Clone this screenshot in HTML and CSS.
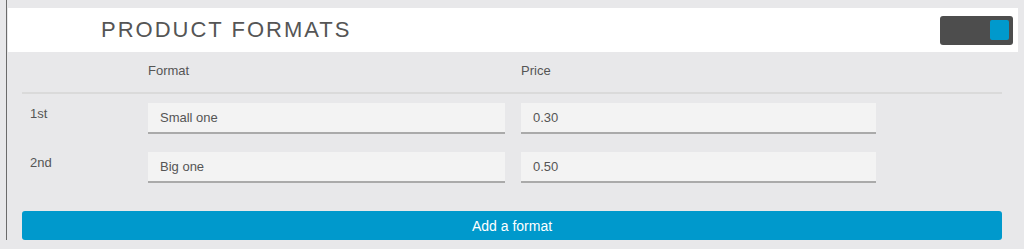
FILE: index.html
```html
<!DOCTYPE html>
<html lang="en">
<head>
    <meta charset="UTF-8">
    <meta name="viewport" content="width=device-width, initial-scale=1.0">
    <title>Product formats</title>
    <link rel="stylesheet" href="styles.css">
</head>
<body>
    <div class="panel">
        <div class="panel-header">
            <h2>PRODUCT FORMATS</h2>
            <div class="toggle"><span class="toggle-knob"></span></div>
        </div>
        <div class="panel-body">
            <div class="row head">
                <span></span>
                <span>Format</span>
                <span>Price</span>
            </div>
            <div class="row">
                <label>1st</label>
                <input type="text" value="Small one">
                <input type="text" value="0.30">
            </div>
            <div class="row">
                <label>2nd</label>
                <input type="text" value="Big one">
                <input type="text" value="0.50">
            </div>
            <button type="button">Add a format</button>
        </div>
    </div>
</body>
</html>
```

FILE: styles.css
```css
body {
    margin: 0;
    background-color: #e8e8ea;
    font-family: "Liberation Sans", Arial, sans-serif;
    color: #555;
}
.panel {
    margin-left: 6px;
    height: 240px;
    box-sizing: border-box;
    border-left: 1px solid #6b6b6b;
    padding: 8px 6px 0 1px;
}
.panel-header {
    height: 44px;
    background: white;
    display: flex;
    align-items: center;
    justify-content: space-between;
    padding: 0 5px 0 93px;
}
.panel-header h2 {
    margin: 0;
    font-size: 22px;
    font-weight: normal;
    letter-spacing: 2px;
    color: #555;
}
.toggle {
    width: 73px;
    height: 29px;
    background: #4d4d4d;
    border-radius: 3px;
    display: flex;
    align-items: center;
    justify-content: flex-end;
    padding-right: 4px;
    box-sizing: border-box;
}
.toggle-knob {
    width: 19px;
    height: 20px;
    background: #0099cc;
    border-radius: 2px;
}
.panel-body {
    padding: 0 16px 0 14px;
}
.row {
    display: grid;
    grid-template-columns: 110px 357px 355px;
    column-gap: 16px;
    margin-top: 18px;
    font-size: 13px;
    line-height: 15px;
}
.row.head {
    margin-top: 0;
    padding: 11px 0 14px;
    border-bottom: 2px solid #dadada;
    margin-bottom: 9px;
}
.row.head + .row {
    margin-top: 0;
}
.row label {
    padding: 3px 0 0 8px;
}
.row input {
    height: 31px;
    box-sizing: border-box;
    border: none;
    border-bottom: 2px solid #aaa;
    background: #f3f3f3;
    padding: 0 12px;
    font-family: inherit;
    font-size: 13px;
    color: #555;
    outline: none;
}
button {
    display: block;
    width: 100%;
    height: 29px;
    margin-top: 28px;
    border: none;
    border-radius: 3px;
    background-color: #0099cc;
    color: white;
    font-family: inherit;
    font-size: 14px;
    cursor: pointer;
}
```
